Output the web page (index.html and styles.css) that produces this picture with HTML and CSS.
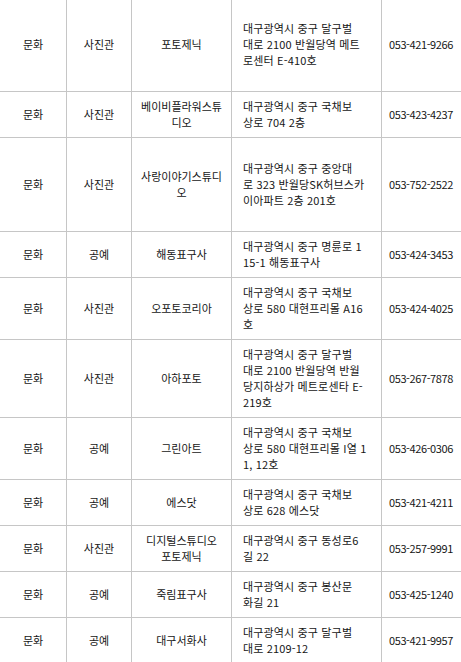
FILE: index.html
```html
<!DOCTYPE html>
<html lang="ko">
<head>
<meta charset="utf-8">
<title>문화 업체 목록</title>
<link rel="stylesheet" href="styles.css">
</head>
<body>
<table class="list">
  <colgroup>
    <col class="c-cat">
    <col class="c-type">
    <col class="c-name">
    <col class="c-addr">
    <col class="c-tel">
  </colgroup>
  <tbody>
    <tr class="first">
      <td>문화</td><td>사진관</td><td class="name">포토제닉</td>
      <td class="addr">대구광역시 중구 달구벌<br>대로 2100 반월당역 메트<br>로센터 E-410호</td>
      <td class="tel">053-421-9266</td>
    </tr>
    <tr>
      <td>문화</td><td>사진관</td><td class="name">베이비플라워스튜<br>디오</td>
      <td class="addr">대구광역시 중구 국채보<br>상로 704 2층</td>
      <td class="tel">053-423-4237</td>
    </tr>
    <tr class="tall">
      <td>문화</td><td>사진관</td><td class="name">사랑이야기스튜디<br>오</td>
      <td class="addr">대구광역시 중구 중앙대<br>로 323 반월당SK허브스카<br>이아파트 2층 201호</td>
      <td class="tel">053-752-2522</td>
    </tr>
    <tr>
      <td>문화</td><td>공예</td><td class="name">해동표구사</td>
      <td class="addr">대구광역시 중구 명륜로 1<br>15-1 해동표구사</td>
      <td class="tel">053-424-3453</td>
    </tr>
    <tr>
      <td>문화</td><td>사진관</td><td class="name">오포토코리아</td>
      <td class="addr">대구광역시 중구 국채보<br>상로 580 대현프리몰 A16<br>호</td>
      <td class="tel">053-424-4025</td>
    </tr>
    <tr>
      <td>문화</td><td>사진관</td><td class="name">아하포토</td>
      <td class="addr">대구광역시 중구 달구벌<br>대로 2100 반월당역 반월<br>당지하상가 메트로센타 E-<br>219호</td>
      <td class="tel">053-267-7878</td>
    </tr>
    <tr>
      <td>문화</td><td>공예</td><td class="name">그린아트</td>
      <td class="addr">대구광역시 중구 국채보<br>상로 580 대현프리몰 I열 1<br>1, 12호</td>
      <td class="tel">053-426-0306</td>
    </tr>
    <tr>
      <td>문화</td><td>공예</td><td class="name">에스닷</td>
      <td class="addr">대구광역시 중구 국채보<br>상로 628 에스닷</td>
      <td class="tel">053-421-4211</td>
    </tr>
    <tr>
      <td>문화</td><td>사진관</td><td class="name">디지털스튜디오<br>포토제닉</td>
      <td class="addr">대구광역시 중구 동성로6<br>길 22</td>
      <td class="tel">053-257-9991</td>
    </tr>
    <tr>
      <td>문화</td><td>공예</td><td class="name">죽림표구사</td>
      <td class="addr">대구광역시 중구 봉산문<br>화길 21</td>
      <td class="tel">053-425-1240</td>
    </tr>
    <tr>
      <td>문화</td><td>공예</td><td class="name">대구서화사</td>
      <td class="addr">대구광역시 중구 달구벌<br>대로 2109-12</td>
      <td class="tel">053-421-9957</td>
    </tr>
  </tbody>
</table>
</body>
</html>
```

FILE: styles.css
```css
html, body {
  margin: 0;
  padding: 0;
  overflow: hidden;
  background: #ffffff;
}

body {
  font-family: "Noto Sans CJK KR", "Noto Sans", sans-serif;
  font-size: 11px;
  color: #161616;
}

.list {
  border-collapse: separate;
  border-spacing: 0;
  table-layout: fixed;
  width: 461px;
}

.c-cat { width: 67px; }
.c-type { width: 65px; }
.c-name { width: 100px; }
.c-addr { width: 150px; }
.c-tel { width: 79px; }

.list td {
  box-sizing: border-box;
  padding: 6px 5px 7px;
  line-height: 16px;
  text-align: center;
  vertical-align: middle;
  white-space: nowrap;
  border-right: 1px solid #c6c6c6;
  border-bottom: 1px solid #c6c6c6;
}

.list tr.first { height: 92px; }
.list tr.first td { padding-top: 4px; }
.list tr.tall { height: 94px; }

.list td.addr {
  text-align: left;
  padding-left: 11px;
  padding-right: 4px;
  letter-spacing: 0.15px;
}

.list td.tel {
  text-align: left;
  padding-left: 7px;
  padding-right: 0;
  border-right: none;
  letter-spacing: -0.4px;
}
```
